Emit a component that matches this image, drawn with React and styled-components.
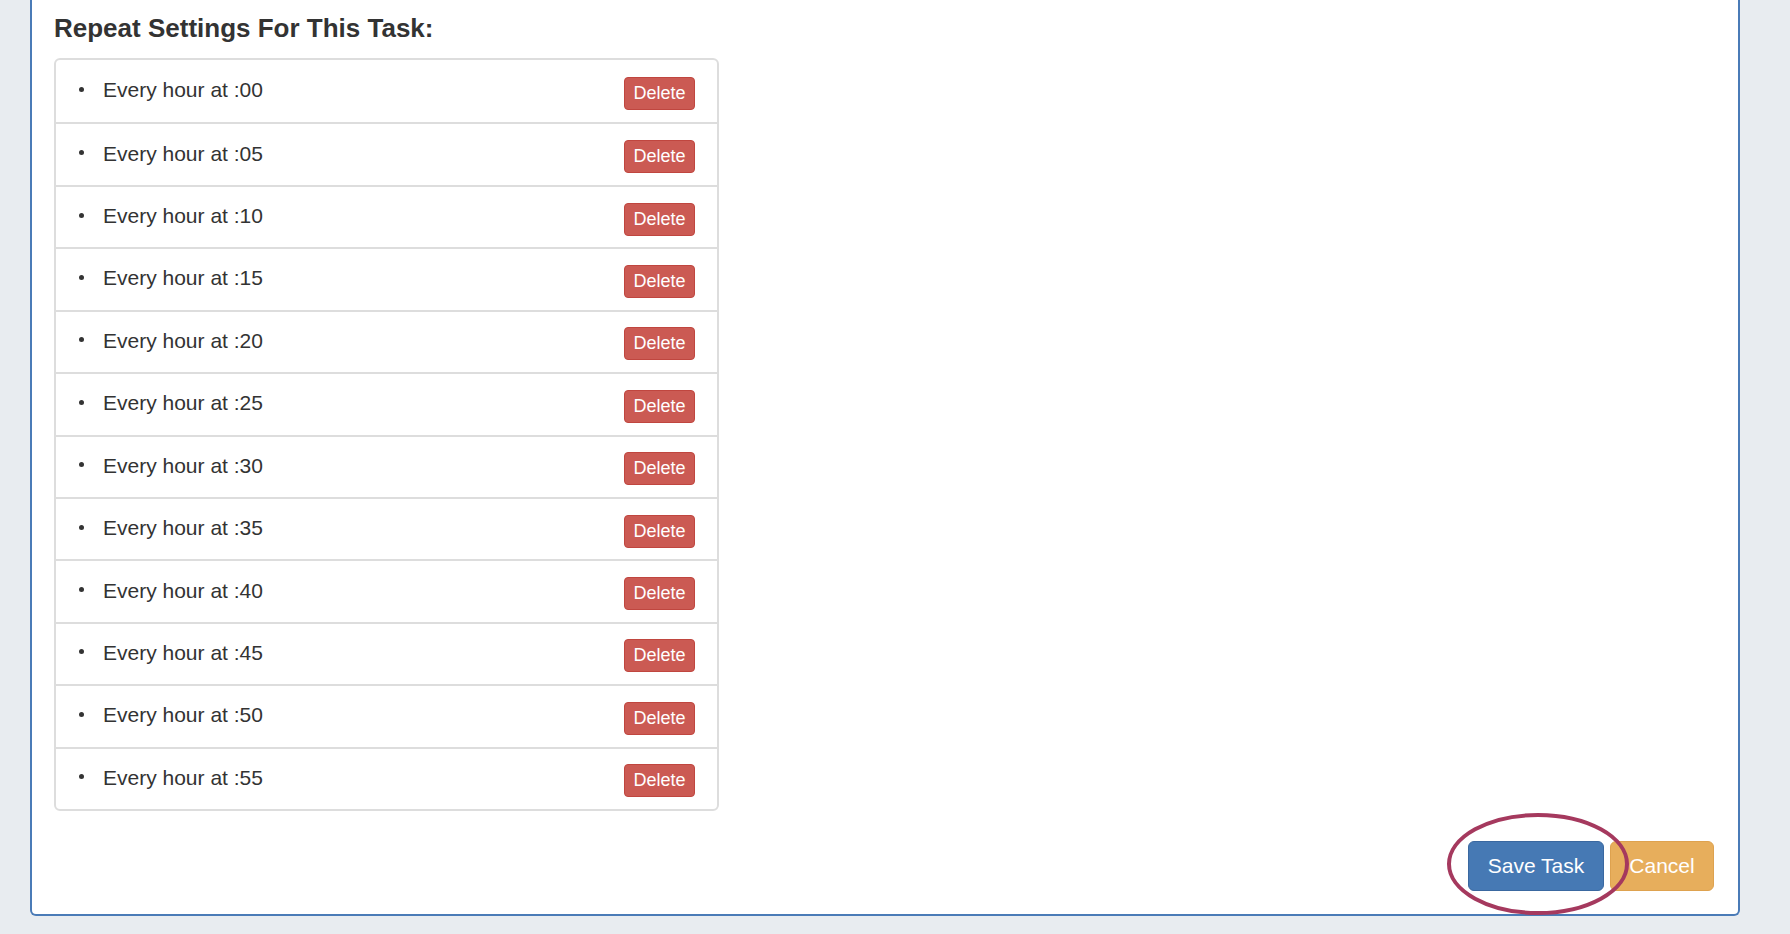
import React from 'react'
import styled, { createGlobalStyle } from 'styled-components'

const GlobalStyle = createGlobalStyle`
  html, body {
    margin: 0;
    padding: 0;
    background: #e8ecf0;
    font-family: "Liberation Sans", Arial, Helvetica, sans-serif;
    color: #333;
  }
`

const minutes = ['00', '05', '10', '15', '20', '25', '30', '35', '40', '45', '50', '55']

function App() {
  return (
    <>
      <GlobalStyle />
      <Page>
        <Panel>
          <Title>Repeat Settings For This Task:</Title>
          <List>
            {minutes.map((m, i) => (
              <Row key={m} first={i === 0}>
                <Label>
                  <Dot />
                  Every hour at :{m}
                </Label>
                <DeleteButton>Delete</DeleteButton>
              </Row>
            ))}
          </List>
          <Footer>
            <SaveWrap>
              <Button variant="primary">Save Task</Button>
              <Circle viewBox="0 0 184 104">
                <ellipse cx="92" cy="52" rx="89" ry="49" fill="none" stroke="#a5395e" strokeWidth="4" />
              </Circle>
            </SaveWrap>
            <Button variant="warning">Cancel</Button>
          </Footer>
        </Panel>
      </Page>
    </>
  )
}

const Page = styled.div`
  padding: 0 50px 20px 30px;
  min-height: 934px;
  box-sizing: border-box;
`
const Panel = styled.div`
  width: 1710px;
  box-sizing: border-box;
  background: #fff;
  border: 2px solid #4a7bb7;
  border-top: none;
  border-radius: 0 0 6px 6px;
  padding: 13px 24px 23px 22px;
`
const Title = styled.h4`
  margin: 0 0 15px;
  font-size: 26px;
  line-height: 30px;
  font-weight: bold;
  color: #333;
`
const List = styled.div`
  width: 665px;
  height: 753px;
  box-sizing: border-box;
  border: 2px solid #ddd;
  border-radius: 6px;
  display: grid;
  grid-auto-rows: 1fr;
`
const Row = styled.div`
  display: flex;
  align-items: center;
  justify-content: space-between;
  padding: 0 22px 0 23px;
  border-top: ${p => (p.first ? 'none' : '2px solid #ddd')};
`
const Label = styled.div`
  display: flex;
  align-items: center;
  font-size: 21px;
  line-height: 30px;
  margin-top: -2px;
`
const Dot = styled.span`
  width: 5px;
  height: 5px;
  border-radius: 50%;
  background: #333;
  margin-right: 19px;
  margin-top: -2px;
`
const DeleteButton = styled.button`
  font-family: inherit;
  font-size: 18px;
  line-height: 27px;
  color: #fff;
  background: #cb5a53;
  border: 1.5px solid #c0463f;
  border-radius: 4px;
  padding: 0 7px;
  width: 71px;
  height: 33px;
  margin-top: 4px;
`
const Footer = styled.div`
  display: flex;
  justify-content: flex-end;
  gap: 6px;
  margin-top: 30px;
`
const SaveWrap = styled.div`
  position: relative;
`
const Circle = styled.svg`
  position: absolute;
  left: -22px;
  top: -29px;
  width: 184px;
  height: 104px;
  pointer-events: none;
`
const Button = styled.button`
  font-family: inherit;
  font-size: 21px;
  line-height: 30px;
  color: #fff;
  height: 50px;
  padding: 0 18px;
  border-radius: 6px;
  background: ${p => (p.variant === 'primary' ? '#4679b4' : '#e7ae5c')};
  border: 1.5px solid ${p => (p.variant === 'primary' ? '#3a68a0' : '#dea24f')};
  min-width: ${p => (p.variant === 'primary' ? '136px' : '104px')};
`

export default App
